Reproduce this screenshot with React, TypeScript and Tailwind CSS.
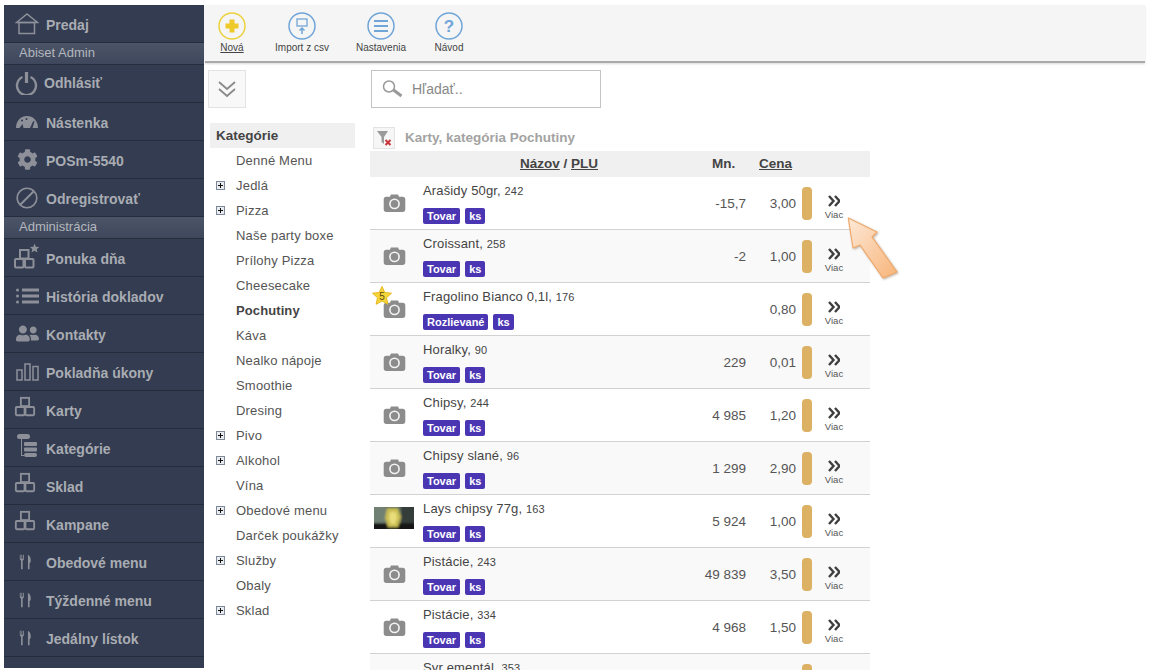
import type { ReactNode } from "react";
import { FaCog, FaUserFriends } from "react-icons/fa";

const blocks = (
  <svg className="mb-[6px] mr-1" width="22" height="22" viewBox="0 0 24 24" fill="none" stroke="currentColor" strokeWidth="2">
    <rect x="7.500" y="2" width="9" height="9" />
    <rect x="2" y="12" width="9.500" height="9" rx="1" />
    <rect x="12.500" y="12" width="9.500" height="9" rx="1" />
  </svg>
);

const fork = (
  <svg className="mr-1" width="13" height="18" viewBox="0 0 16 20" fill="currentColor">
    <path d="M1 1h1v5h1V1h1v5h1V1h1v6l-1.500 1.500V19h-2V8.500L1 7z" />
    <path d="M11 19V1c2.500 1 3.500 4 3.500 7.500 0 1.500-.5 2.500-1.500 3V19z" />
  </svg>
);

const iconHome = (
  <svg width="24" height="22" viewBox="0 0 24 22" fill="none" stroke="currentColor" strokeWidth="1.500">
    <path d="M1.500 9.500 12 1l10.500 8.500z" />
    <rect x="4" y="9.500" width="15.500" height="11" />
  </svg>
);

const iconPower = (
  <svg width="23" height="23" viewBox="0 0 23 23" fill="none" stroke="currentColor">
    <path d="M7.500 5a9.500 9.500 0 1 0 8 0" strokeWidth="2.400" />
    <path d="M11.500 0v11" strokeWidth="3.200" />
  </svg>
);

const iconGauge = (
  <svg width="22" height="14" viewBox="0 0 22 14" fill="currentColor">
    <path d="M0 13C0 5.500 5 1 11 1s11 4.500 11 12h-5.500l2-6.500-1.200-.6L14 13H7.500L6.500 9 3.500 13z" />
    <circle cx="6" cy="5.500" r="1" fill="#333c50" />
    <circle cx="10.500" cy="4" r="1" fill="#333c50" />
  </svg>
);

const iconBan = (
  <svg width="22" height="22" viewBox="0 0 22 22" fill="none" stroke="currentColor" strokeWidth="1.600">
    <circle cx="11" cy="11" r="9.800" />
    <path d="M4.500 17.500 17.500 4.500" strokeWidth="2" />
  </svg>
);

const iconStarBlocks = (
  <svg className="mb-[4px]" width="26" height="26" viewBox="0 0 26 26" fill="none" stroke="currentColor" strokeWidth="2">
    <rect x="6" y="7" width="8.500" height="8.500" />
    <rect x="1" y="16" width="8.500" height="8.500" rx="1" />
    <rect x="11" y="16" width="8.500" height="8.500" rx="1" />
    <path d="m20.500.500 1.400 3.200 3.400.3-2.600 2.200.8 3.300-3-1.800-3 1.800.8-3.300L16 4l3.400-.3z" fill="currentColor" stroke="none" />
  </svg>
);

const iconList = (
  <svg width="23" height="16" viewBox="0 0 23 16" fill="currentColor">
    <circle cx="1.500" cy="2" r="1.500" />
    <circle cx="1.500" cy="8" r="1.500" />
    <circle cx="1.500" cy="14" r="1.500" />
    <rect x="6" y="0.500" width="17" height="3" />
    <rect x="6" y="6.500" width="17" height="3" />
    <rect x="6" y="12.500" width="17" height="3" />
  </svg>
);

const iconBars = (
  <svg width="23" height="18" viewBox="0 0 23 18" fill="none" stroke="currentColor" strokeWidth="1.500">
    <rect x="1" y="7" width="5" height="10" />
    <rect x="9" y="1" width="5" height="16" />
    <rect x="17" y="3.500" width="5" height="13.500" />
  </svg>
);

const iconTree = (
  <svg className="mb-[4px]" width="22" height="24" viewBox="0 0 22 24" fill="currentColor">
    <rect x="1" y="0" width="13" height="5" rx="2.500" />
    <rect x="8" y="8" width="13" height="4" rx="1" />
    <rect x="8" y="13.500" width="13" height="4" rx="1" />
    <rect x="8" y="19" width="13" height="4" rx="2" />
    <path d="M5 5h1v16h2v1H5z" />
  </svg>
);

type MenuEntry = { label?: string; section?: string; icon?: ReactNode; tight?: boolean };

const menu: MenuEntry[] = [
  { label: "Predaj", icon: iconHome },
  { section: "Abiset Admin" },
  { label: "Odhlásiť", icon: iconPower, tight: true },
  { label: "Nástenka", icon: iconGauge },
  { label: "POSm-5540", icon: <FaCog size={21} /> },
  { label: "Odregistrovať", icon: iconBan },
  { section: "Administrácia" },
  { label: "Ponuka dňa", icon: iconStarBlocks },
  { label: "História dokladov", icon: iconList },
  { label: "Kontakty", icon: <FaUserFriends size={23} /> },
  { label: "Pokladňa úkony", icon: iconBars },
  { label: "Karty", icon: blocks },
  { label: "Kategórie", icon: iconTree },
  { label: "Sklad", icon: blocks },
  { label: "Kampane", icon: blocks },
  { label: "Obedové menu", icon: fork },
  { label: "Týždenné menu", icon: fork },
  { label: "Jedálny lístok", icon: fork },
];

const categories = [
  { name: "Denné Menu" },
  { name: "Jedlá", plus: true },
  { name: "Pizza", plus: true },
  { name: "Naše party boxe" },
  { name: "Prílohy Pizza" },
  { name: "Cheesecake" },
  { name: "Pochutiny", active: true },
  { name: "Káva" },
  { name: "Nealko nápoje" },
  { name: "Smoothie" },
  { name: "Dresing" },
  { name: "Pivo", plus: true },
  { name: "Alkohol", plus: true },
  { name: "Vína" },
  { name: "Obedové menu", plus: true },
  { name: "Darček poukážky" },
  { name: "Služby", plus: true },
  { name: "Obaly" },
  { name: "Sklad", plus: true },
];

type Product = { name: string; plu: number; qty: string; price: string; tag?: string; star?: boolean; photo?: boolean };

const products: Product[] = [
  { name: "Arašidy 50gr", plu: 242, qty: "-15,7", price: "3,00" },
  { name: "Croissant", plu: 258, qty: "-2", price: "1,00" },
  { name: "Fragolino Bianco 0,1l", plu: 176, qty: "", price: "0,80", tag: "Rozlievané", star: true },
  { name: "Horalky", plu: 90, qty: "229", price: "0,01" },
  { name: "Chipsy", plu: 244, qty: "4 985", price: "1,20" },
  { name: "Chipsy slané", plu: 96, qty: "1 299", price: "2,90" },
  { name: "Lays chipsy 77g", plu: 163, qty: "5 924", price: "1,00", photo: true },
  { name: "Pistácie", plu: 243, qty: "49 839", price: "3,50" },
  { name: "Pistácie", plu: 334, qty: "4 968", price: "1,50" },
  { name: "Syr ementál", plu: 353, qty: "812", price: "2,20" },
];

function Camera() {
  return (
    <svg width="23" height="18" viewBox="0 0 24 20">
      <path d="M3 3h4l1-2.500h8L17 3h4a3 3 0 0 1 3 3v11a3 3 0 0 1-3 3H3a3 3 0 0 1-3-3V6a3 3 0 0 1 3-3z" fill="#8c8c8c" />
      <circle cx="12" cy="11" r="6" fill="#f4f4f4" />
      <circle cx="12" cy="11" r="4.200" fill="#8c8c8c" />
    </svg>
  );
}

function LaysPhoto() {
  return (
    <svg className="mb-[6px]" width="40" height="22" viewBox="0 0 40 22">
      <defs>
        <filter id="laysBlur" x="-20%" y="-20%" width="140%" height="140%">
          <feGaussianBlur stdDeviation="1.200" />
        </filter>
        <clipPath id="laysClip">
          <rect width="40" height="22" />
        </clipPath>
      </defs>
      <g clipPath="url(#laysClip)">
        <rect width="40" height="22" fill="#5b6b60" />
        <g filter="url(#laysBlur)">
          <rect x="-2" y="-2" width="14" height="26" fill="#6f8072" />
          <rect x="27" y="-2" width="15" height="26" fill="#343c3a" />
          <rect x="-2" y="16" width="44" height="8" fill="#141517" />
          <path d="M13 1h11l3 9-3 10H14l-3-9z" fill="#c9bd52" />
          <path d="M16 5h6l1 6-2 6h-4l-2-6z" fill="#e9dd7c" />
        </g>
      </g>
    </svg>
  );
}

function ToolItem({ label, width, underline, children }: { label: string; width: string; underline?: boolean; children: ReactNode }) {
  return (
    <div className={`flex flex-col items-center pt-[7px] ${width}`}>
      {children}
      <span className={`mt-[2px] text-[10px] leading-3 text-[#444] ${underline ? "underline" : ""}`}>{label}</span>
    </div>
  );
}

function Tag({ children }: { children: ReactNode }) {
  return <span className="h-4 rounded-[2px] bg-[#4a35b3] px-1 text-[11px] font-bold leading-4 text-white">{children}</span>;
}

function ProductRow({ item, shaded }: { item: Product; shaded: boolean }) {
  return (
    <div className={`relative flex h-[53px] shrink-0 border-b border-[#d2d2d2] ${shaded ? "bg-[#f9f9f9]" : "bg-white"}`}>
      <div className="flex w-[53px] shrink-0 items-center justify-center pr-[5px]">
        {item.photo ? <LaysPhoto /> : <Camera />}
      </div>
      {item.star && (
        <svg className="absolute left-[2px] top-[3px]" width="20" height="20" viewBox="0 0 20 20">
          <path d="m10 .500 2.800 6 6.700.700-5 4.500 1.400 6.600L10 15l-5.900 3.300 1.400-6.600-5-4.500 6.700-.700z" fill="#f5d63a" stroke="#e6b820" />
          <text x="10" y="14" textAnchor="middle" fontSize="10" fill="#5a4a10">5</text>
        </svg>
      )}
      <div className="flex flex-1 flex-col pt-[6px]">
        <div className="h-4 text-[13px] leading-4 tracking-[0.15px] text-[#444]">
          {item.name}, <span className="text-[11px]">{item.plu}</span>
        </div>
        <div className="mt-[9px] flex gap-[5px]">
          <Tag>{item.tag ?? "Tovar"}</Tag>
          <Tag>ks</Tag>
        </div>
      </div>
      <div className="flex w-[56px] items-center justify-end pt-[2px] text-[13.500px] text-[#555]">{item.qty}</div>
      <div className="flex w-[50px] items-center justify-end pt-[2px] text-[13.500px] text-[#555]">{item.price}</div>
      <div className="ml-[6px] mt-[10px] h-[33px] w-[10px] rounded-[4px] bg-[#dcb163]" />
      <div className="flex w-[44px] flex-col items-center pt-[18px]">
        <svg width="12" height="12" viewBox="0 0 12 12" fill="none" stroke="#3f3f3f" strokeWidth="2.400">
          <path d="m1 1 4.500 5L1 11M7 1l4.500 5L7 11" />
        </svg>
        <span className="mt-[3px] text-[9.500px] leading-[10px] text-[#555]">Viac</span>
      </div>
      <div className="w-[14px]" />
    </div>
  );
}

export default function App() {
  return (
    <div className="relative flex h-[670px] w-[1152px] overflow-hidden bg-white pl-1 pt-[5px] font-['Liberation_Sans',Arial,sans-serif]">
      <nav className="flex h-[663px] w-[200px] shrink-0 flex-col bg-[#333c50]">
        {menu.map((entry) =>
          entry.section ? (
            <div key={entry.section} className="flex h-[22px] shrink-0 items-center border-b border-[#262d3d] bg-[linear-gradient(#4c5568,#3e475b)] pb-[2px] pl-[15px] text-[13px] text-[#b4b7bd]">
              {entry.section}
            </div>
          ) : (
            <div key={entry.label} className="flex h-[38px] shrink-0 items-center border-b border-[#252c3b] text-[14px] font-bold text-[#a9acb3]">
              <div className={`flex shrink-0 justify-center pl-1 text-[#8d9099] ${entry.tight ? "w-[40px]" : "w-[42px]"}`}>{entry.icon}</div>
              <span className={entry.tight ? "" : "pt-1"}>{entry.label}</span>
            </div>
          ),
        )}
      </nav>

      <div className="ml-px flex w-[940px] flex-col">
        <header className="flex h-[58px] shrink-0 border-b-2 border-[#a9a9a9] bg-[#f5f5f5] shadow-[0_1px_2px_rgba(0,0,0,0.15)]">
          <ToolItem label="Nová" width="w-[54px]" underline>
            <svg width="28" height="28" viewBox="0 0 28 28" fill="none">
              <circle cx="14" cy="14" r="13" stroke="#ebd23f" strokeWidth="1.500" />
              <path d="M11.500 7.500h5v4h4v5h-4v4h-5v-4h-4v-5h4z" fill="#eec92a" />
            </svg>
          </ToolItem>
          <ToolItem label="Import z csv" width="w-[86px]">
            <svg width="28" height="28" viewBox="0 0 28 28" fill="none" stroke="#70a5d8">
              <circle cx="14" cy="14" r="13" strokeWidth="1.500" />
              <rect x="9" y="7" width="10" height="7" strokeWidth="1.300" />
              <path d="M14 22v-5.500M11.500 18.500l2.500-2.500 2.500 2.500" strokeWidth="1.500" />
            </svg>
          </ToolItem>
          <ToolItem label="Nastavenia" width="w-[72px]">
            <svg width="28" height="28" viewBox="0 0 28 28" fill="none" stroke="#70a5d8">
              <circle cx="14" cy="14" r="13" strokeWidth="1.500" />
              <path d="M7 9h14M7 14h14M7 19h14" strokeWidth="2" />
            </svg>
          </ToolItem>
          <ToolItem label="Návod" width="w-[64px]">
            <svg width="28" height="28" viewBox="0 0 28 28" fill="none" stroke="#70a5d8">
              <circle cx="14" cy="14" r="13" strokeWidth="1.500" />
              <text x="14" y="20" textAnchor="middle" fontSize="17" fontWeight="bold" fill="#70a5d8" stroke="none">?</text>
            </svg>
          </ToolItem>
        </header>

        <div className="flex min-h-0 flex-1">
          <aside className="flex w-[165px] shrink-0 flex-col pl-[3px] pt-[7px]">
            <div className="flex h-[38px] w-[38px] items-center justify-center border border-[#e3e3e3] bg-[#f8f8f8]">
              <svg width="20" height="20" viewBox="0 0 20 20" fill="none" stroke="#8a8a8a" strokeWidth="1.800">
                <path d="m2 3 8 7 8-7M2 10l8 7 8-7" />
              </svg>
            </div>
            <div className="ml-[2px] mt-[15px] flex h-[25px] w-[145px] items-center bg-[#f0f0f0] pl-[6px] pt-[2px] text-[13.500px] font-bold text-[#444]">Kategórie</div>
            {categories.map((cat) => (
              <div key={cat.name} className={`ml-[8px] flex h-[25px] shrink-0 items-center text-[13px] ${cat.active ? "font-bold tracking-[0.1px] text-[#444]" : "tracking-[0.2px] text-[#555]"}`}>
                <div className="w-[20px]">
                  {cat.plus && (
                    <div className="flex h-[9px] w-[9px] items-center justify-center border border-[#7f8896] bg-[#e8ecf0] text-[#111]">
                      <svg width="7" height="7" viewBox="0 0 7 7" fill="currentColor">
                        <path d="M3 1h1v2h2v1H4v2H3V4H1V3h2z" />
                      </svg>
                    </div>
                  )}
                </div>
                {cat.name}
              </div>
            ))}
          </aside>

          <main className="flex w-[500px] shrink-0 flex-col">
            <div className="ml-px mt-[7px] flex h-[38px] w-[230px] shrink-0 items-center border border-[#c4c4c4] bg-white pl-[10px]">
              <svg width="22" height="18" viewBox="0 0 22 18" fill="none" stroke="#999">
                <circle cx="7" cy="6.500" r="5.500" strokeWidth="1.500" />
                <path d="m11.500 10 8 6" strokeWidth="3" />
              </svg>
              <span className="ml-[8px] text-[14px] text-[#888]">Hľadať..</span>
            </div>
            <div className="ml-[3px] mt-[18px] flex h-[23px] shrink-0 items-center">
              <div className="flex h-[22px] w-[22px] items-center justify-center border border-[#e3e3e3] bg-[#f6f6f6]">
                <svg width="16" height="16" viewBox="0 0 16 16">
                  <path d="M1 1h11L8 7v7L5.500 12V7z" fill="#9a9a9a" />
                  <path d="m9.500 10 5 5m0-5-5 5" stroke="#c7343a" strokeWidth="2" />
                </svg>
              </div>
              <span className="ml-[10px] pt-[2px] text-[13.500px] font-bold text-[#a3a3a3]">Karty, kategória Pochutiny</span>
            </div>
            <div className="mt-[2px] flex h-[26px] shrink-0 items-center bg-[#f0f0f0] text-[13.500px] font-bold text-[#444]">
              <div className="w-[342px] pl-[150px]">
                <span className="underline">Názov</span> / <span className="underline">PLU</span>
              </div>
              <div className="w-[47px]">Mn.</div>
              <div className="underline">Cena</div>
            </div>
            {products.map((item, i) => (
              <ProductRow key={item.plu} item={item} shaded={i % 2 === 1} />
            ))}
          </main>
        </div>
      </div>

      <svg className="absolute left-[840px] top-[210px] drop-shadow-[1px_1px_1px_rgba(120,90,60,0.45)]" width="64" height="74" viewBox="840 210 64 74">
        <defs>
          <linearGradient id="arrowFill" x1="0" y1="0" x2="1" y2="1">
            <stop offset="0" stopColor="#fde8d6" />
            <stop offset="1" stopColor="#f8b57a" />
          </linearGradient>
        </defs>
        <path d="M848.300 218 877 232 872 237 897 272 883 278 860 245 853 248z" fill="url(#arrowFill)" stroke="#efaa6c" strokeWidth="1.200" strokeLinejoin="round" />
      </svg>
    </div>
  );
}
